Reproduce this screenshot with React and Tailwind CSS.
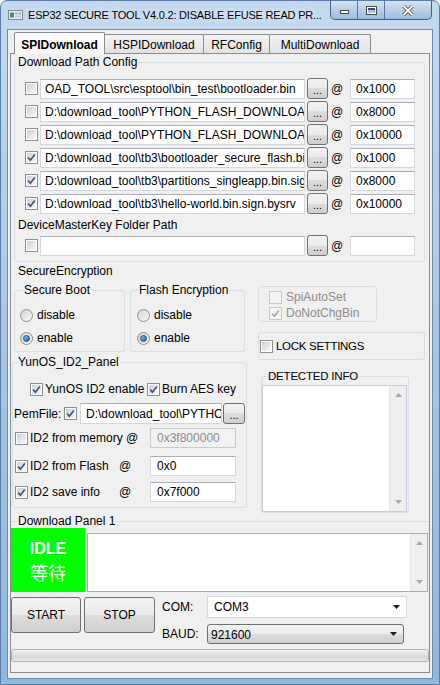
import React from 'react';

const Check = ({ on, dim }) => (
  <span
    className={`relative flex h-[13px] w-[13px] shrink-0 border ${
      dim ? 'border-[#c8c8c8] bg-[#f4f4f4]' : 'border-[#8e8f8f] bg-white'
    }`}
  >
    {!dim && <span className="m-[1px] flex-1 bg-gradient-to-br from-[#cdd0d5] to-[#f9f9f9]" />}
    {on && (
      <svg viewBox="0 0 11 11" className="absolute inset-0 h-[11px] w-[11px]">
        <path d="M2.2 5.6 L4.4 8.2 L8.8 2.4" fill="none" stroke={dim ? '#a9a9a9' : '#3a5689'} strokeWidth="1.7" />
      </svg>
    )}
  </span>
);

const Radio = ({ on }) => (
  <span className="flex h-[13px] w-[13px] shrink-0 items-center justify-center rounded-full border border-[#8e8f8f] bg-gradient-to-br from-[#cfd2d6] to-[#fbfbfb]">
    {on && <span className="h-[7px] w-[7px] rounded-full border border-[#1f4c86] bg-gradient-to-br from-[#8fd0fa] to-[#1d5aa6]" />}
  </span>
);

const Box = ({ className = '', children, dim }) => (
  <div
    className={`flex items-center overflow-hidden whitespace-nowrap border ${
      dim ? 'border-[#cacaca] bg-[#f2f2f2] text-[#8c8c8c]' : 'border-[#d3d8de] border-t-[#abadb3] bg-white'
    } ${className}`}
  >
    {children}
  </div>
);

const Dots = ({ className = '' }) => (
  <div
    className={`flex shrink-0 items-end justify-center rounded-[3px] border border-[#707070] bg-[linear-gradient(#f2f2f2,#ebebeb_50%,#dddddd_50%,#cfcfcf)] pb-[5px] text-[11px] leading-[6px] ${className}`}
  >
    ...
  </div>
);

const VScroll = () => (
  <div className="flex w-[17px] shrink-0 flex-col items-center justify-between border-l border-[#e6e6e6] bg-[#efefef] py-[7px]">
    <svg width="7" height="4" viewBox="0 0 7 4">
      <path d="M0 4 L3.5 0 L7 4Z" fill="#a6a6a6" />
    </svg>
    <svg width="7" height="4" viewBox="0 0 7 4">
      <path d="M0 0 L3.5 4 L7 0Z" fill="#a6a6a6" />
    </svg>
  </div>
);

const Arrow = () => (
  <svg width="7" height="4" viewBox="0 0 7 4">
    <path d="M0 0 L3.5 4 L7 0Z" fill="#1e1e1e" />
  </svg>
);

const paths = [
  [false, 'OAD_TOOL\\src\\esptool\\bin_test\\bootloader.bin', '0x1000'],
  [false, 'D:\\download_tool\\PYTHON_FLASH_DOWNLOAD', '0x8000'],
  [false, 'D:\\download_tool\\PYTHON_FLASH_DOWNLOAD', '0x10000'],
  [true, 'D:\\download_tool\\tb3\\bootloader_secure_flash.bin', '0x1000'],
  [true, 'D:\\download_tool\\tb3\\partitions_singleapp.bin.sign', '0x8000'],
  [true, 'D:\\download_tool\\tb3\\hello-world.bin.sign.bysrv', '0x10000'],
];

const PathRow = ({ on, path, addr }) => (
  <div className="flex h-[23px] items-center pl-[10px]">
    <Check on={on} />
    <Box className="ml-[2px] h-[20px] w-[265px] pl-[4px]">{path}</Box>
    <Dots className="ml-[2px] h-[21px] w-[21px]" />
    <span className="w-[22px] pl-[3px]">@</span>
    <Box className="h-[20px] w-[65px] pl-[5px]">{addr}</Box>
  </div>
);

const tabs = ['HSPIDownload', 'RFConfig', 'MultiDownload'];
const tabW = ['w-[100px]', 'w-[67px]', 'w-[102px]'];

export default function App() {
  return (
    <div className="h-[685px] w-[440px] bg-white font-['Liberation_Sans','Noto_Sans_CJK_SC',Arial,sans-serif] text-[12px] leading-[14px] text-black">
      <div className="flex h-full flex-col rounded-t-[7px] border border-[#5b7ca5] bg-gradient-to-b from-[#c4d9ee] via-[#a8c6e5] to-[#8fb8de] px-[6px] pb-[5px]">
        {/* title bar */}
        <div className="flex h-[28px] shrink-0 items-start">
          <div className="flex h-[28px] flex-1 items-center overflow-hidden">
            <svg width="15" height="10" viewBox="0 0 15 10" className="ml-[1px] shrink-0">
              <rect x="0.5" y="0.5" width="14" height="9" fill="#e9ecef" stroke="#7d8791" />
              <rect x="2" y="2.5" width="4" height="5" fill="#3f8f7e" />
              <rect x="7" y="2.5" width="2.5" height="2" fill="#9aa6b1" />
              <rect x="10.5" y="2.5" width="2.5" height="2" fill="#9aa6b1" />
              <rect x="7" y="5.5" width="6" height="2" fill="#c4ccd3" />
            </svg>
            <span className="ml-[5px] whitespace-nowrap text-[11px] tracking-[-0.2px] [text-shadow:0_0_6px_#ffffff]">
              ESP32 SECURE TOOL V4.0.2: DISABLE EFUSE READ PR...
            </span>
          </div>
          <div className="mr-[1px] flex h-[19px] overflow-hidden rounded-b-[5px] border border-t-0 border-[#3f5f88] bg-gradient-to-b from-[#d3e3f3] to-[#9cbbdc]">
            <div className="flex w-[27px] items-center justify-center border-r border-[#5676a0]">
              <span className="mt-[4px] h-[4px] w-[9px] border border-[#4a4a4a] bg-white" />
            </div>
            <div className="flex w-[27px] items-center justify-center border-r border-[#5676a0]">
              <span className="h-[9px] w-[11px] border border-[#4a4a4a] bg-white p-[1px]">
                <span className="block h-full w-full border-t-[2px] border-[#4a4a4a] bg-[#a9c3df]" />
              </span>
            </div>
            <div className="flex w-[46px] items-center justify-center">
              <svg width="12" height="11" viewBox="0 0 12 11">
                <path d="M1.5 1 L10.5 10 M10.5 1 L1.5 10" stroke="#4a4a4a" strokeWidth="3.6" />
                <path d="M1.5 1 L10.5 10 M10.5 1 L1.5 10" stroke="#ffffff" strokeWidth="2" />
              </svg>
            </div>
          </div>
        </div>

        {/* client area */}
        <div className="flex h-[650px] flex-col border border-[#6d8cb2] bg-[#f0f0f0] px-[2px]">
          <div className="relative z-10 mt-[2px] flex h-[21px] items-start pl-[4px]">
            <div className="flex h-[22px] w-[91px] items-center justify-center rounded-t-[2px] border border-b-0 border-[#898c95] bg-gradient-to-b from-white to-[#f7f7f7] pt-[2px] font-bold">
              SPIDownload
            </div>
            {tabs.map((t, i) => (
              <div
                key={t}
                className={`-ml-[1px] mt-[2px] flex h-[19px] items-center justify-center rounded-t-[2px] border border-b-0 border-[#898c95] bg-gradient-to-b from-[#f3f3f3] to-[#e3e3e3] pt-[1px] ${tabW[i]}`}
              >
                {t}
              </div>
            ))}
          </div>

          <div className="flex h-[620px] flex-col border border-[#898c95] bg-[#f0f0f0]">
            {/* Download Path Config */}
            <fieldset className="ml-[3px] mt-[1px] w-[411px] rounded-[3px] border border-[#d5dfe5] pb-[4px] pt-[8px]">
              <legend className="ml-[2px] px-[1px] leading-[14px]">Download Path Config</legend>
              {paths.map(([on, p, a], i) => (
                <PathRow key={i} on={on} path={p} addr={a} />
              ))}
              <div className="ml-[3px] mt-[3px] leading-[14px]">DeviceMasterKey Folder Path</div>
              <div className="mt-[2px]">
                <PathRow on={false} path="" addr="" />
              </div>
            </fieldset>

            <div className="flex items-start">
              {/* left column */}
              <div className="flex w-[236px] flex-col">
                <div className="mt-[2px] pl-[7px] leading-[14px]">SecureEncryption</div>
                <div className="mt-[5px] flex">
                  <fieldset className="ml-[3px] w-[111px] rounded-[3px] border border-[#d5dfe5] pb-[4px]">
                    <legend className="ml-[8px] px-[1px] leading-[14px]">Secure Boot</legend>
                    <div className="mt-[9px] flex h-[18px] items-center gap-[4px] pl-[5px]">
                      <Radio />
                      <span>disable</span>
                    </div>
                    <div className="mt-[5px] flex h-[18px] items-center gap-[4px] pl-[5px]">
                      <Radio on />
                      <span>enable</span>
                    </div>
                  </fieldset>
                  <fieldset className="ml-[5px] w-[115px] rounded-[3px] border border-[#d5dfe5] pb-[4px]">
                    <legend className="ml-[7px] px-[1px] leading-[14px]">Flash Encryption</legend>
                    <div className="mt-[9px] flex h-[18px] items-center gap-[4px] pl-[6px]">
                      <Radio />
                      <span>disable</span>
                    </div>
                    <div className="mt-[5px] flex h-[18px] items-center gap-[4px] pl-[6px]">
                      <Radio on />
                      <span>enable</span>
                    </div>
                  </fieldset>
                </div>

                <fieldset className="ml-[1px] mt-[3px] w-[235px] rounded-[3px] border border-[#d5dfe5] pb-[5px]">
                  <legend className="ml-[4px] px-[1px] leading-[14px]">YunOS_ID2_Panel</legend>
                  <div className="mt-[12px] flex h-[16px] items-center pl-[17px]">
                    <Check on />
                    <span className="ml-[2px] w-[102px] whitespace-nowrap">YunOS ID2 enable</span>
                    <Check on />
                    <span className="ml-[2px] whitespace-nowrap">Burn AES key</span>
                  </div>
                  <div className="mt-[6px] flex h-[21px] items-center pl-[1px]">
                    <span className="w-[50px]">PemFile:</span>
                    <Check on />
                    <Box className="ml-[3px] h-[21px] w-[142px] pl-[5px]">D:\download_tool\PYTHON_FLASH</Box>
                    <Dots className="ml-[1px] h-[21px] w-[22px]" />
                  </div>
                  <div className="mt-[4px] flex h-[20px] items-center pl-[2px]">
                    <Check />
                    <span className="ml-[2px] w-[120px] whitespace-nowrap">ID2 from memory @</span>
                    <Box dim className="h-[20px] w-[86px] pl-[6px]">0x3f800000</Box>
                  </div>
                  <div className="mt-[8px] flex h-[20px] items-center pl-[2px]">
                    <Check on />
                    <span className="ml-[2px] w-[89px] whitespace-nowrap">ID2 from Flash</span>
                    <span className="w-[31px]">@</span>
                    <Box className="h-[20px] w-[86px] pl-[6px]">0x0</Box>
                  </div>
                  <div className="mt-[6px] flex h-[20px] items-center pl-[2px]">
                    <Check on />
                    <span className="ml-[2px] w-[89px] whitespace-nowrap">ID2 save info</span>
                    <span className="w-[31px]">@</span>
                    <Box className="h-[20px] w-[86px] pl-[6px]">0x7f000</Box>
                  </div>
                </fieldset>
              </div>

              {/* right column */}
              <div className="ml-[11px] flex flex-col">
                <div className="mt-[24px] flex h-[36px] w-[119px] flex-col gap-[2px] rounded-[3px] border border-[#dcdcdc] pl-[10px] pt-[3px] text-[#8d8d8d]">
                  <div className="flex h-[14px] items-center gap-[4px]">
                    <Check dim />
                    <span>SpiAutoSet</span>
                  </div>
                  <div className="flex h-[14px] items-center gap-[4px]">
                    <Check dim on />
                    <span>DoNotChgBin</span>
                  </div>
                </div>
                <div className="mt-[10px] flex h-[28px] w-[167px] items-center rounded-[3px] border border-[#dcdcdc] pl-[1px]">
                  <Check />
                  <span className="ml-[3px] text-[11.5px] tracking-[-0.3px]">LOCK SETTINGS</span>
                </div>
                <fieldset className="ml-[3px] mt-[9px] w-[148px] rounded-[3px] border border-[#d5dfe5]">
                  <legend className="ml-[5px] px-[1px] text-[11.5px] leading-[14px] tracking-[-0.2px]">DETECTED INFO</legend>
                  <div className="mt-[2px] flex h-[127px] w-[145px] border border-[#c9ced6] bg-white">
                    <div className="flex-1" />
                    <VScroll />
                  </div>
                </fieldset>
              </div>
            </div>

            {/* Download Panel 1 */}
            <fieldset className="mt-[1px] border-0 border-t border-[#d5dfe5]">
              <legend className="ml-[6px] px-[1px] leading-[14px]">Download Panel 1</legend>
              <div className="flex items-end">
                <div className="flex h-[64px] w-[74px] flex-col items-center justify-center bg-[#00ff00] text-white">
                  <span className="mt-[2px] text-[16px] font-bold leading-[18px]">IDLE</span>
                  <span className="mt-[3px] font-['Noto_Sans_CJK_SC',sans-serif] text-[18px] leading-[22px]">等待</span>
                </div>
                <div className="ml-[2px] flex h-[59px] w-[341px] border border-[#a7abb2] bg-white">
                  <div className="flex-1" />
                  <VScroll />
                </div>
              </div>
            </fieldset>

            <div className="mt-[4px] flex items-start">
              <div className="mt-[1px] flex h-[36px] w-[70px] items-center justify-center rounded-[3px] border border-[#707070] bg-[linear-gradient(#f2f2f2,#ebebeb_50%,#dddddd_50%,#cfcfcf)]">
                START
              </div>
              <div className="ml-[3px] mt-[1px] flex h-[36px] w-[71px] items-center justify-center rounded-[3px] border border-[#707070] bg-[linear-gradient(#f2f2f2,#ebebeb_50%,#dddddd_50%,#cfcfcf)]">
                STOP
              </div>
              <div className="ml-[7px] flex flex-col">
                <div className="flex h-[22px] items-center">
                  <span className="w-[45px]">COM:</span>
                  <div className="flex h-[22px] w-[200px] items-center justify-between border border-[#d3d8de] bg-white pl-[6px] pr-[6px]">
                    <span>COM3</span>
                    <Arrow />
                  </div>
                </div>
                <div className="mt-[6px] flex h-[20px] items-center">
                  <span className="w-[45px]">BAUD:</span>
                  <div className="flex h-[20px] w-[197px] items-center justify-between rounded-[3px] border border-[#707070] bg-[linear-gradient(#f2f2f2,#ebebeb_50%,#dddddd_50%,#cfcfcf)] pl-[3px] pr-[6px]">
                    <span className="pt-[2px]">921600</span>
                    <Arrow />
                  </div>
                </div>
              </div>
            </div>

            <div className="mt-[5px] h-[13px] w-full rounded-[3px] border border-[#b2b2b2] bg-[linear-gradient(#f3f3f3,#e0e0e0_45%,#d6d6d6_55%,#e8e8e8)]" />
          </div>
        </div>
      </div>
    </div>
  );
}
